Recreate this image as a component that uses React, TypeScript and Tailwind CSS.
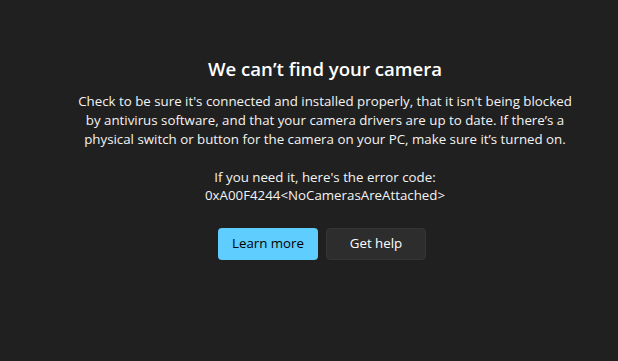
export default function App() {
  return (
    <div className="w-[618px] h-[361px] bg-[#202020] text-white flex flex-col items-center pt-[55px] pl-[32px]" style={{ fontFamily: '"Segoe UI", "Open Sans", sans-serif' }}>
      <h1 className="text-[18.6px] leading-[28px] font-semibold">We can’t find your camera</h1>
      <p className="mt-[9px] text-[13.3px] leading-[19px] text-center text-[#f3f3f3]">
        Check to be sure it's connected and installed properly, that it isn't being blocked
        <br />
        by antivirus software, and that your camera drivers are up to date. If there’s a
        <br />
        physical switch or button for the camera on your PC, make sure it’s turned on.
      </p>
      <p className="mt-[19px] text-[13.3px] leading-[18px] text-center text-[#f3f3f3]">
        If you need it, here's the error code:
        <br />
        0xA00F4244&lt;NoCamerasAreAttached&gt;
      </p>
      <div className="mt-[24px] flex gap-[8px] -ml-[6px]">
        <button className="w-[100px] h-[32px] rounded-[4px] bg-[#60cdff] text-black text-[13.3px]">Learn more</button>
        <button className="w-[100px] h-[32px] rounded-[4px] bg-[#2d2d2d] border border-[#353535] text-white text-[13.3px]">Get help</button>
      </div>
    </div>
  );
}
